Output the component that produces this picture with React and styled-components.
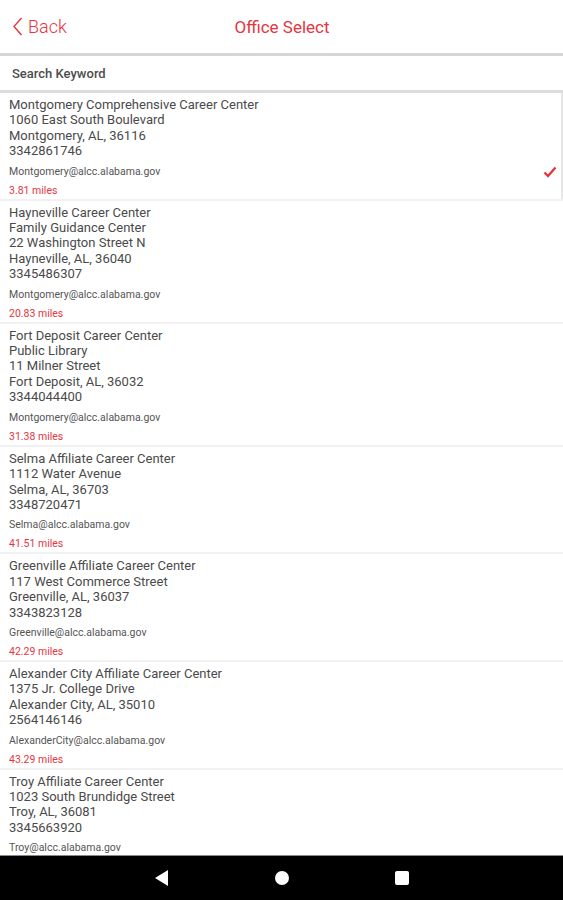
import React from 'react'
import styled, { createGlobalStyle } from 'styled-components'

const GlobalStyle = createGlobalStyle`
  html, body {
    margin: 0;
    padding: 0;
    background: #ffffff;
    font-family: Roboto, "Noto Sans", sans-serif;
  }
`

const RED = '#e6353f'

const Screen = styled.div`
  width: 563px;
  height: 900px;
  display: flex;
  flex-direction: column;
  overflow: hidden;
  background: #fff;
`

const Header = styled.div`
  height: 53px;
  display: flex;
  align-items: center;
  position: relative;
  border-bottom: 3px solid #d6d6d6;
  flex-shrink: 0;
`

const BackButton = styled.div`
  display: flex;
  align-items: center;
  gap: 5px;
  padding-left: 12px;
  color: ${RED};
  font-size: 18px;
  font-weight: 300;
  z-index: 1;
`

const Title = styled.div`
  position: absolute;
  left: 0;
  right: 0;
  text-align: center;
  color: ${RED};
  font-size: 17px;
  padding-left: 1px;
`

const SearchBar = styled.div`
  height: 34px;
  display: flex;
  align-items: center;
  padding-left: 12px;
  font-size: 13px;
  font-weight: 500;
  color: #4d4d4d;
  border-bottom: 3px solid #dcdcdc;
  flex-shrink: 0;
`

const List = styled.div`
  flex: 1;
  overflow: hidden;
  background: #f1f1f1;
  display: flex;
  flex-direction: column;
  gap: 2px;
`

const Item = styled.div`
  background: #fff;
  padding: 4px 9px 0 9px;
  display: flex;
  align-items: flex-end;
  justify-content: space-between;
  flex-shrink: 0;
  border-right: ${p => (p.$selected ? '2px solid #e6e6e6' : 'none')};
`

const Info = styled.div`
  display: flex;
  flex-direction: column;
`

const Line = styled.div`
  font-size: 13px;
  line-height: 15.4px;
  color: #4a4a4a;
`

const Email = styled.div`
  margin-top: 5px;
  font-size: 10.5px;
  line-height: 16px;
  color: #555;
`

const Miles = styled.div`
  margin-top: 3px;
  font-size: 10.5px;
  line-height: 16px;
  color: ${RED};
`

const Check = styled.div`
  margin-bottom: 21px;
  margin-right: -5px;
  display: flex;
`

const NavBar = styled.div`
  height: 44px;
  background: #000;
  border-top: 1px solid #888;
  display: flex;
  align-items: center;
  justify-content: center;
  gap: 104px;
  flex-shrink: 0;
`

const offices = [
  {
    lines: ['Montgomery Comprehensive Career Center', '1060 East South Boulevard', 'Montgomery, AL, 36116', '3342861746'],
    email: 'Montgomery@alcc.alabama.gov',
    miles: '3.81 miles',
    selected: true
  },
  {
    lines: ['Hayneville Career Center', 'Family Guidance Center', '22 Washington Street N', 'Hayneville, AL, 36040', '3345486307'],
    email: 'Montgomery@alcc.alabama.gov',
    miles: '20.83 miles'
  },
  {
    lines: ['Fort Deposit Career Center', 'Public Library', '11 Milner Street', 'Fort Deposit, AL, 36032', '3344044400'],
    email: 'Montgomery@alcc.alabama.gov',
    miles: '31.38 miles'
  },
  {
    lines: ['Selma Affiliate Career Center', '1112 Water Avenue', 'Selma, AL, 36703', '3348720471'],
    email: 'Selma@alcc.alabama.gov',
    miles: '41.51 miles'
  },
  {
    lines: ['Greenville Affiliate Career Center', '117 West Commerce Street', 'Greenville, AL, 36037', '3343823128'],
    email: 'Greenville@alcc.alabama.gov',
    miles: '42.29 miles'
  },
  {
    lines: ['Alexander City Affiliate Career Center', '1375 Jr. College Drive', 'Alexander City, AL, 35010', '2564146146'],
    email: 'AlexanderCity@alcc.alabama.gov',
    miles: '43.29 miles'
  },
  {
    lines: ['Troy Affiliate Career Center', '1023 South Brundidge Street', 'Troy, AL, 36081', '3345663920'],
    email: 'Troy@alcc.alabama.gov'
  }
]

const App = () => {
  return (
    <Screen>
      <GlobalStyle />
      <Header>
        <BackButton>
          <svg width="11" height="19" viewBox="0 0 11 19">
            <path d="M9.5 1 L2 9.5 L9.5 18" fill="none" stroke={RED} strokeWidth="1.4" />
          </svg>
          Back
        </BackButton>
        <Title>Office Select</Title>
      </Header>

      <SearchBar>Search Keyword</SearchBar>

      <List>
        {offices.map((o, i) => (
          <Item key={i} $selected={o.selected}>
            <Info>
              {o.lines.map((l, j) => (
                <Line key={j}>{l}</Line>
              ))}
              <Email>{o.email}</Email>
              {o.miles && <Miles>{o.miles}</Miles>}
            </Info>
            {o.selected && (
              <Check>
                <svg width="14" height="12" viewBox="0 0 14 12">
                  <path d="M1.5 6.5 L5 10 L12.5 1.5" fill="none" stroke={RED} strokeWidth="2.4" />
                </svg>
              </Check>
            )}
          </Item>
        ))}
      </List>

      <NavBar>
        <svg width="16" height="18" viewBox="0 0 16 18">
          <path d="M14 1 L14 17 L1 9 Z" fill="#fff" />
        </svg>
        <svg width="16" height="16" viewBox="0 0 16 16">
          <circle cx="8" cy="8" r="7" fill="#fff" />
        </svg>
        <svg width="16" height="16" viewBox="0 0 16 16">
          <rect x="1" y="1" width="14" height="14" rx="2" fill="#fff" />
        </svg>
      </NavBar>
    </Screen>
  )
}

export default App
